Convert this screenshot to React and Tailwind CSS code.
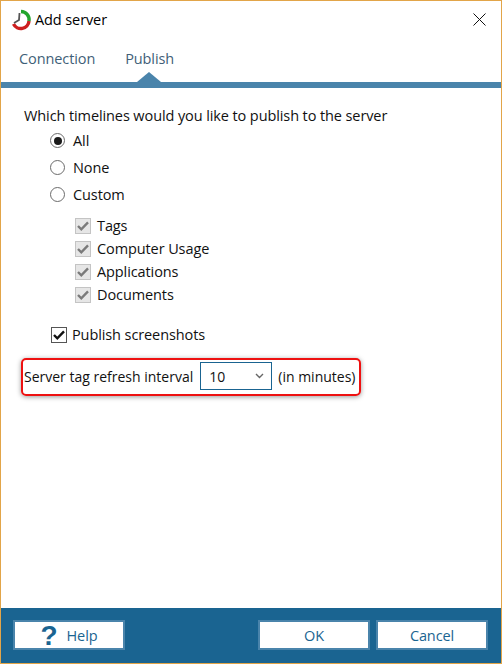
import React from "react";

function Radio({ checked, label }) {
  return (
    <div className="flex items-center h-[27px]">
      <span className="w-[15px] h-[15px] rounded-full border border-[#6b6b6b] bg-white flex items-center justify-center">
        {checked && <span className="w-[8px] h-[8px] rounded-full bg-[#1a1a1a]" />}
      </span>
      <span className="ml-[8px]">{label}</span>
    </div>
  );
}

function Check({ label, disabled }) {
  const c = disabled ? "#7a7a7a" : "#111111";
  return (
    <div className="flex items-center h-[23px]">
      <span className={"w-[16px] h-[16px] flex items-center justify-center border " + (disabled ? "border-[#c4c4c4] bg-[#e6e6e6]" : "border-[#555555] bg-white")}>
        <svg width="12" height="10" viewBox="0 0 12 10" fill="none">
          <path d="M1 5 L4.3 8.3 L11 1.4" stroke={c} strokeWidth="2.4" />
        </svg>
      </span>
      <span className={disabled ? "ml-[6px]" : "ml-[5px]"}>{label}</span>
    </div>
  );
}

function Btn({ children, className }) {
  return (
    <div className={"h-[30px] pt-[1px] bg-white border-2 border-[#4a84ab] flex items-center justify-center text-[#1a6491] " + className}>
      {children}
    </div>
  );
}

export default function App() {
  return (
    <div className="w-[502px] h-[664px] flex flex-col bg-white border border-[#e2a549] text-[14.5px] text-[#111111] font-['Open_Sans','Noto_Sans',sans-serif] tracking-[-0.1px] overflow-hidden">
      <div className="h-[38px] flex items-center pl-[9px] pr-[15px] shrink-0">
        <svg className="mb-[1px]" width="22" height="22" viewBox="0 0 22 22" fill="none">
          <path d="M11 2.5 A8.2 8.2 0 0 1 19 12" stroke="#22a52c" strokeWidth="3.4" />
          <path d="M19 12 A8.2 8.2 0 0 1 3.5 15" stroke="#cc1f1f" strokeWidth="3.4" />
          <path d="M9.5 4 L9 11 L4 14" stroke="#555555" strokeWidth="1.8" />
        </svg>
        <span className="ml-[3px] text-[#000000]">Add server</span>
        <svg className="ml-auto mb-[2px]" width="13" height="13" viewBox="0 0 13 13" fill="none">
          <path d="M0.5 0.5 L12.5 12.5 M12.5 0.5 L0.5 12.5" stroke="#111111" strokeWidth="1" />
        </svg>
      </div>

      <div className="h-[43px] flex items-center pl-[18px] gap-[30px] pb-[3px] text-[#3f5f78] shrink-0 relative">
        <span>Connection</span>
        <span>Publish</span>
        <span className="absolute left-[136px] bottom-0 w-0 h-0 border-l-[12px] border-r-[12px] border-b-[10px] border-l-transparent border-r-transparent border-b-[#4a84ab]" />
      </div>
      <div className="h-[6px] bg-[#4a84ab] shrink-0" />

      <div className="flex-1 pl-[23px] pt-[18px] flex flex-col">
        <div className="leading-[20px]">Which timelines would you like to publish to the server</div>
        <div className="pl-[26px] mt-[1px]">
          <Radio checked label="All" />
          <Radio label="None" />
          <Radio label="Custom" />
        </div>
        <div className="pl-[51px] mt-[6px]">
          <Check disabled label="Tags" />
          <Check disabled label="Computer Usage" />
          <Check disabled label="Applications" />
          <Check disabled label="Documents" />
        </div>
        <div className="pl-[27px] mt-[17px]">
          <Check label="Publish screenshots" />
        </div>
        <div className="-ml-[3px] mt-[12px] w-[340px] h-[38px] rounded-[5px] border-2 border-[#ee1111] shadow-[0_1px_5px_rgba(0,0,0,0.4)] flex items-center pl-[1px] pb-[2px] text-[14px] tracking-normal whitespace-nowrap text-[#111111]">
          <span>Server tag refresh interval</span>
          <div className="ml-[7px] w-[72px] h-[28px] border border-[#1a6491] shrink-0 flex items-center justify-between pl-[8px] pr-[7px]">
            <span>10</span>
            <svg width="9" height="6" viewBox="0 0 9 6" fill="none">
              <path d="M1 1 L4.5 4.5 L8 1" stroke="#666666" strokeWidth="1.4" />
            </svg>
          </div>
          <span className="ml-[6px]">(in minutes)</span>
        </div>
      </div>

      <div className="h-[55px] bg-[#1a6491] flex items-center pl-[12px] pr-[13px] pb-[1px] shrink-0">
        <Btn className="w-[112px]">
          <span className="text-[28px] font-bold leading-none font-['Liberation_Sans',sans-serif] mr-[9px]">?</span>
          <span>Help</span>
        </Btn>
        <Btn className="w-[112px] ml-auto">OK</Btn>
        <Btn className="w-[112px] ml-[6px]">Cancel</Btn>
      </div>
    </div>
  );
}
